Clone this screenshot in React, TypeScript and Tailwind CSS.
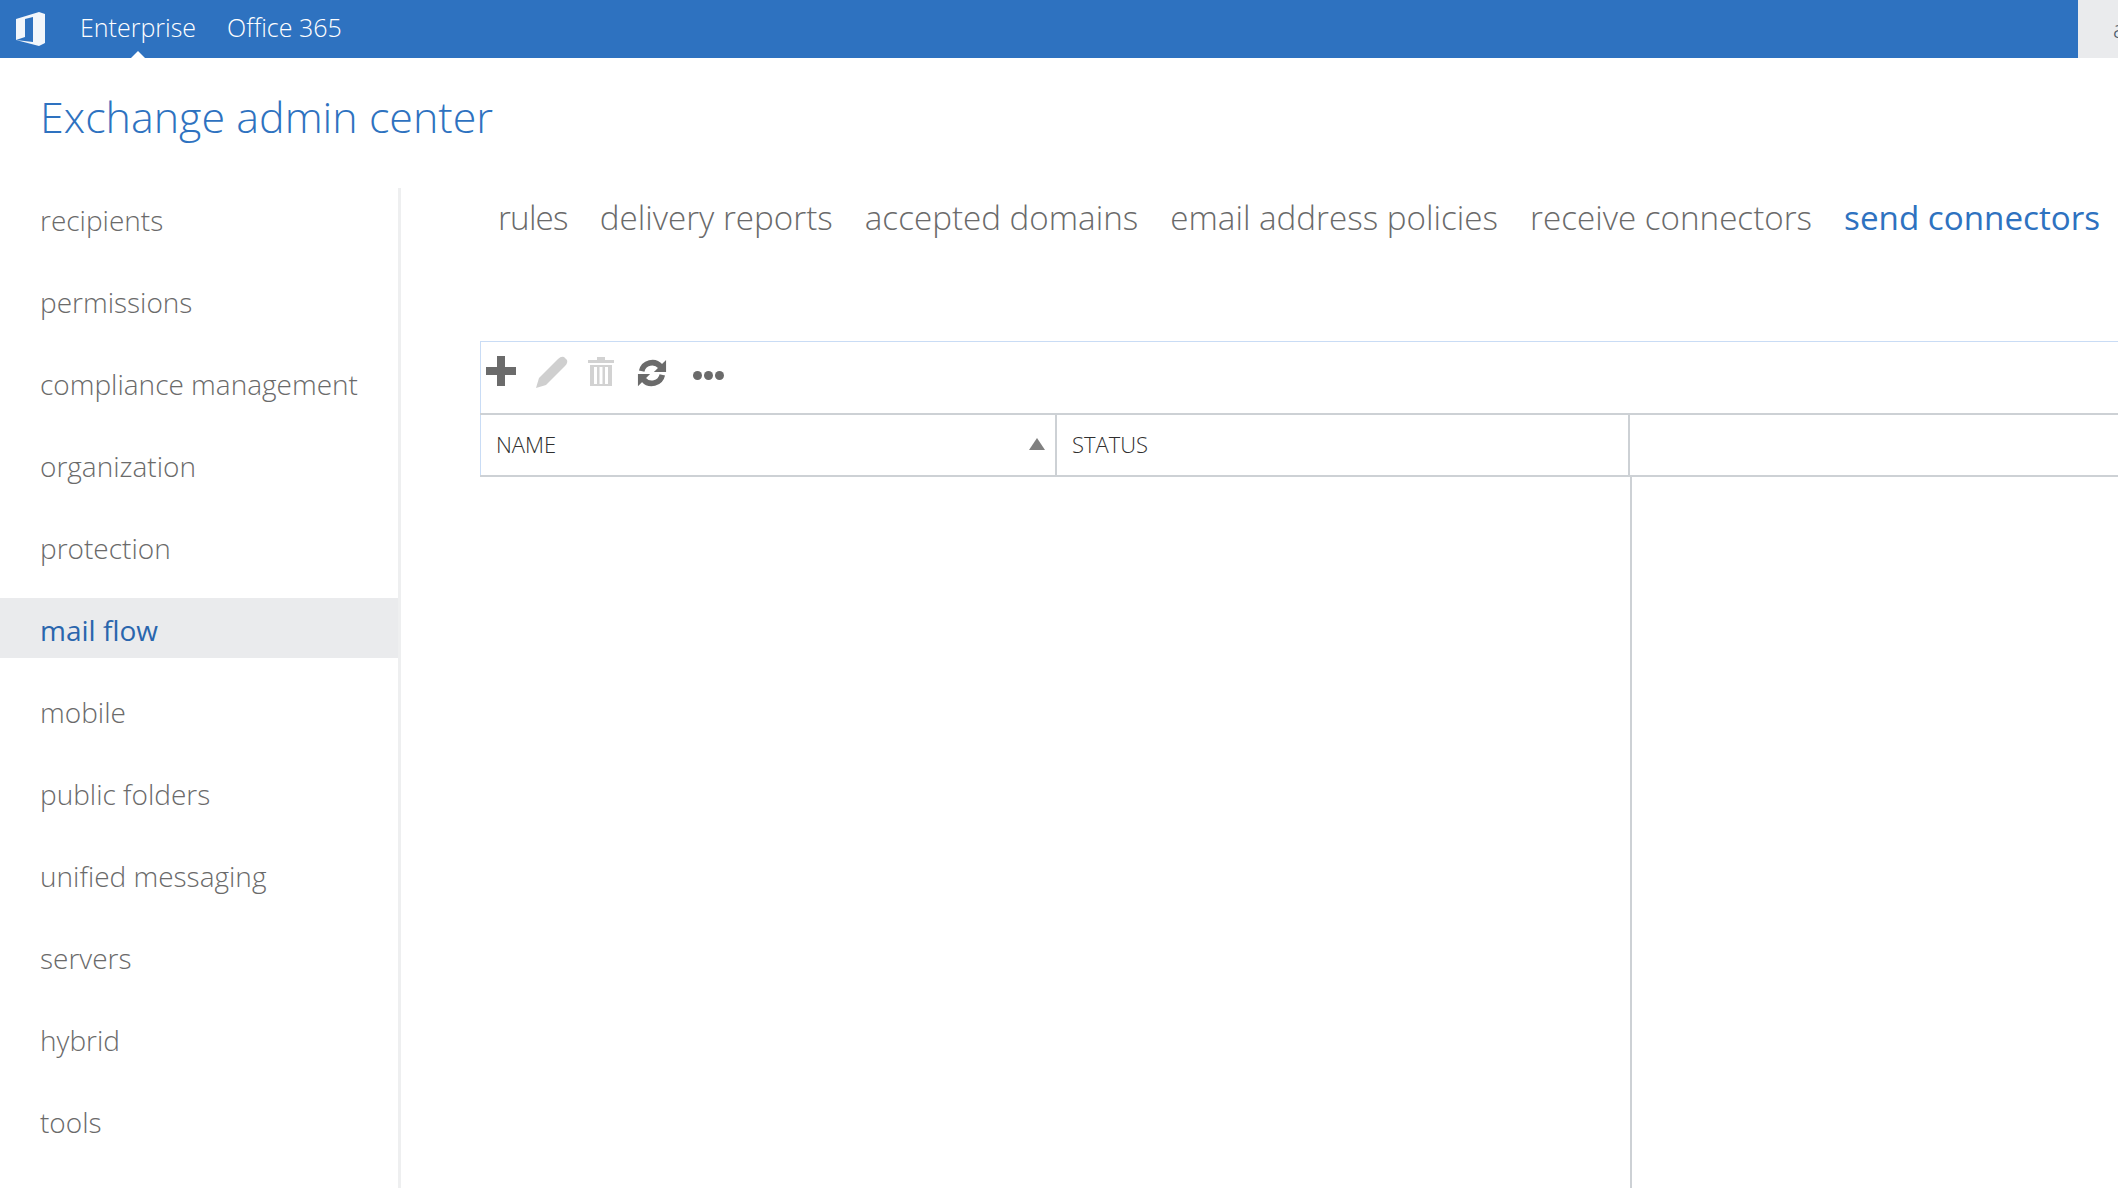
import React from "react";

const navItems = ["recipients", "permissions", "compliance management", "organization", "protection", "mail flow", "mobile", "public folders", "unified messaging", "servers", "hybrid", "tools"];
const tabs = ["rules", "delivery reports", "accepted domains", "email address policies", "receive connectors", "send connectors"];

const App: React.FC = () => {
  return (
    <div className="flex h-[1188px] w-[2118px] flex-col overflow-hidden bg-white font-['Open_Sans','Noto_Sans',sans-serif] font-light">
      {/* top bar */}
      <div className="flex h-[58px] flex-shrink-0 bg-[#2e72c0]">
        <div className="flex flex-1 items-center">
          <svg className="ml-[15px] h-[36px] w-[36px]" viewBox="0 0 36 36">
            <path d="M1 8 L24 1 L30 3 L30 32 L24 35 L1 29 L18 31 L18 6 L10 8 L10 26 L1 29 Z" fill="#f2f6fb" />
          </svg>
          <div className="relative ml-[29px] flex h-full items-center pb-[2px] text-[25px] text-white">
            Enterprise
            <div className="absolute bottom-0 left-1/2 h-0 w-0 -translate-x-1/2 border-x-[7px] border-b-[7px] border-x-transparent border-b-white" />
          </div>
          <div className="ml-[31px] pb-[2px] text-[25px] text-white">Office 365</div>
        </div>
        <div className="flex w-[40px] items-center overflow-hidden bg-[#eaebed] pl-[35px] text-[24px] text-[#4a5a6a]">a</div>
      </div>

      <div className="flex h-[130px] flex-shrink-0 items-center pl-[40px] pb-[12px] text-[43px] text-[#2e72c0]">Exchange admin center</div>

      <div className="flex min-h-0 flex-1">
        {/* left nav */}
        <div className="box-content w-[398px] flex-shrink-0 border-r-[3px] border-[#eeeff0]">
          {navItems.map((item) => (
            <div
              key={item}
              className={`mb-[22px] flex h-[60px] items-center pl-[40px] pt-[3px] text-[28px] ${item === "mail flow" ? "bg-[#eaebed] font-normal text-[#2a66ad]" : "text-[#6a6a6a]"}`}
            >
              {item}
            </div>
          ))}
        </div>

        <div className="min-w-0 flex-1">
          <div className="flex h-[153px] gap-[32px] whitespace-nowrap pl-[97px] pt-[2px] text-[33.2px] text-[#6a6a6a]">
            {tabs.map((t) => (
              <div
                key={t}
                className={`leading-[56px] ${t === "send connectors" ? "font-normal text-[#2e72c0]" : ""} ${t === "rules" ? "tracking-[-0.8px]" : ""}`}
              >
                {t}
              </div>
            ))}
          </div>

          {/* toolbar */}
          <div className="ml-[79px] flex h-[72px] items-start border-l border-t border-[#c9dcf5] pl-[5px] pt-[14px]">
            <svg className="h-[30px] w-[30px]" viewBox="0 0 30 30">
              <path d="M11 0 H19 V11 H30 V19 H19 V30 H11 V19 H0 V11 H11 Z" fill="#6b6b6b" />
            </svg>
            <svg className="ml-[20px] h-[32px] w-[32px]" viewBox="0 0 32 32">
              <path d="M0 32 L3 22 L22 3 Q25 0 28 1 L31 4 Q32 7 29 10 L10 29 Z" fill="#cfcfcf" />
            </svg>
            <svg className="ml-[20px] mt-[1px] h-[30px] w-[26px]" viewBox="0 0 26 30">
              <path d="M9 0 H17 V3 H26 V6 H0 V3 H9 Z" fill="#d2d2d2" />
              <path d="M2 8 H24 V29 H2 Z M6 10 V27 H9 V10 Z M11.5 10 V27 H14.5 V10 Z M17 10 V27 H20 V10 Z" fill="#d2d2d2" fillRule="evenodd" />
            </svg>
            <svg className="ml-[23px] mt-[2px] h-[30px] w-[30px]" viewBox="0 0 32 32" fill="none">
              <path d="M5 14 A11.5 11.5 0 0 1 25 9" stroke="#6b6b6b" strokeWidth="6" />
              <path d="M31 2 L31 15 L18 15 Z" fill="#6b6b6b" />
              <path d="M27 18 A11.5 11.5 0 0 1 7 23" stroke="#6b6b6b" strokeWidth="6" />
              <path d="M1 30 L1 17 L14 17 Z" fill="#6b6b6b" />
            </svg>
            <div className="ml-[26px] mt-[15px] flex gap-[2px]">
              <div className="h-[9px] w-[9px] rounded-full bg-[#6b6b6b]" />
              <div className="h-[9px] w-[9px] rounded-full bg-[#6b6b6b]" />
              <div className="h-[9px] w-[9px] rounded-full bg-[#6b6b6b]" />
            </div>
          </div>

          {/* table header */}
          <div className="ml-[79px] flex h-[64px] border-y-2 border-[#cdd1d5] text-[22px] text-[#2f2f2f]">
            <div className="relative flex w-[575px] items-center border-l border-[#c9dcf5] pb-[2px] pl-[15px]">
              NAME
              <div className="absolute right-[10px] top-[23px] h-0 w-0 border-x-[8px] border-b-[12px] border-x-transparent border-b-[#808080]" />
            </div>
            <div className="flex w-[575px] items-center border-x-2 border-[#cdd1d5] pb-[2px] pl-[15px]">STATUS</div>
          </div>
          <div className="ml-[1229px] h-full w-[2px] bg-[#cdd1d5]" />
        </div>
      </div>
    </div>
  );
};

export default App;
